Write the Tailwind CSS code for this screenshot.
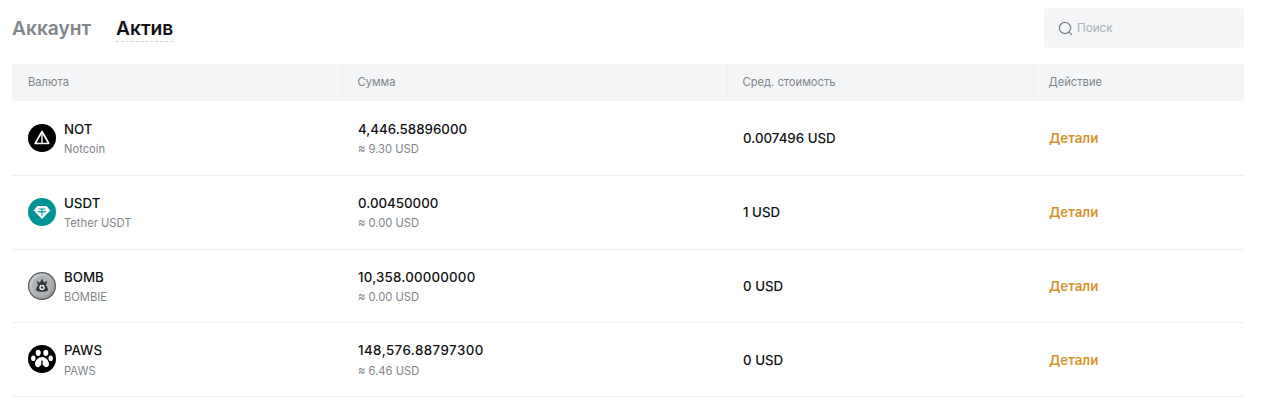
<!DOCTYPE html>
<html lang="ru">
<head>
  <meta charset="UTF-8" />
  <meta name="viewport" content="width=device-width, initial-scale=1.0" />
  <title>Актив</title>
  <script src="https://cdn.jsdelivr.net/npm/@tailwindcss/browser@4"></script>
</head>
<body class="bg-white h-[415px] overflow-hidden font-['Inter','Noto_Sans',sans-serif]">
  <div class="pl-3 pr-[26px] pt-2">

    <!-- Tabs + search -->
    <div class="flex items-start justify-between h-[56px]">
      <div class="flex gap-[25px] pt-[7px] text-[19.2px] font-semibold leading-[26px]">
        <span class="text-[#81858c]">Аккаунт</span>
        <span class="text-[#121214] border-b border-dashed border-[#d0d3d7] h-[27px]">Актив</span>
      </div>
      <div class="flex items-center gap-1 w-[200px] h-10 px-[14px] rounded bg-[#f3f5f7]">
        <svg class="w-[15px] h-[15px]" viewBox="0 0 15 15" fill="none" stroke="#81858c" stroke-width="1.3">
          <circle cx="7" cy="7" r="5.6" />
          <path d="M11 11l2.6 2.6" stroke-linecap="round" />
        </svg>
        <span class="pt-px text-[11.7px] text-[#adb1b8]">Поиск</span>
      </div>
    </div>

    <!-- Table -->
    <table class="w-[1232px] table-fixed border-collapse">
      <colgroup>
        <col class="w-[330px]" /><col class="w-[385px]" /><col class="w-[306px]" /><col class="w-[211px]" />
      </colgroup>
      <thead class="bg-[#f3f5f7] text-[11.2px] text-[#81858c] text-left">
        <tr class="h-[37px]">
          <th class="pl-4 font-normal">Валюта</th>
          <th class="pl-[15px] font-normal border-l border-[#eef0f2]">Сумма</th>
          <th class="pl-[15px] font-normal border-l border-[#eef0f2]">Сред. стоимость</th>
          <th class="pl-[15px] font-normal border-l border-[#eef0f2]">Действие</th>
        </tr>
      </thead>
      <tbody>
        <tr class="h-[74px] border-b border-[#eceef0]">
          <td class="pl-4">
            <div class="flex items-center gap-2">
              <svg class="w-7 h-7" viewBox="0 0 28 28">
                <circle cx="14" cy="14" r="14" fill="#000" />
                <path d="M14 7.5L20.800 19.500H7.200Z" fill="none" stroke="#fff" stroke-width="1.700" stroke-linejoin="round" />
                <path d="M14 8v11.500" stroke="#fff" stroke-width="1.400" />
              </svg>
              <div>
                <div class="text-[13.3px] leading-5 font-medium text-[#121214]">NOT</div>
                <div class="text-[11.2px] leading-4 mt-[2px] text-[#81858c]">Notcoin</div>
              </div>
            </div>
          </td>
          <td class="pl-4">
            <div class="text-[13.3px] leading-5 font-medium text-[#121214]">4,446.58896000</div>
            <div class="text-[11.2px] leading-4 mt-[2px] text-[#81858c]">≈ 9.30 USD</div>
          </td>
          <td class="pl-4 pt-[2px] text-[13.3px] font-medium text-[#121214]">0.007496 USD</td>
          <td class="pl-4 pt-[2px] text-[13.3px] font-semibold text-[#d6932f]">Детали</td>
        </tr>
        <tr class="h-[74px] border-b border-[#eceef0]">
          <td class="pl-4">
            <div class="flex items-center gap-2">
              <svg class="w-7 h-7" viewBox="0 0 28 28">
                <circle cx="14" cy="14" r="14" fill="#009393" />
                <path d="M9.500 8.500h9L21.800 12.500 14 20.500 6.200 12.500Z" fill="#fff" stroke="#fff" stroke-linejoin="round" />
                <path d="M10.500 11h7M14 11v6.500M10 13.200c2.500 1 5.500 1 8 0" fill="none" stroke="#009393" stroke-width="1.100" />
              </svg>
              <div>
                <div class="text-[13.3px] leading-5 font-medium text-[#121214]">USDT</div>
                <div class="text-[11.2px] leading-4 mt-[2px] text-[#81858c]">Tether USDT</div>
              </div>
            </div>
          </td>
          <td class="pl-4">
            <div class="text-[13.3px] leading-5 font-medium text-[#121214]">0.00450000</div>
            <div class="text-[11.2px] leading-4 mt-[2px] text-[#81858c]">≈ 0.00 USD</div>
          </td>
          <td class="pl-4 pt-[2px] text-[13.3px] font-medium text-[#121214]">1 USD</td>
          <td class="pl-4 pt-[2px] text-[13.3px] font-semibold text-[#d6932f]">Детали</td>
        </tr>
        <tr class="h-[73px] border-b border-[#eceef0]">
          <td class="pl-4">
            <div class="flex items-center gap-2">
              <svg class="w-7 h-7" viewBox="0 0 28 28">
                <defs>
                  <linearGradient id="bombRim" x1="0" y1="0" x2="1" y2="1">
                    <stop offset="0" stop-color="#d6d8da" />
                    <stop offset="1" stop-color="#8d9094" />
                  </linearGradient>
                </defs>
                <circle cx="14" cy="14" r="14" fill="#55585c" />
                <circle cx="14" cy="14" r="12.800" fill="url(#bombRim)" />
                <circle cx="14" cy="14" r="10" fill="#adb0b4" />
                <path d="M8 18.500c0-2.200.8-4 2.200-5.200L8.500 8.800l3.300 2L14 6.800l2.200 4 3.300-2-1.700 4.500C19.200 14.500 20 16.300 20 18.500c-3 1.700-9 1.700-12 0Z" fill="#33353a" />
                <circle cx="14" cy="15.500" r="2.700" fill="#eceded" />
                <circle cx="14" cy="15.500" r="1.200" fill="#33353a" />
              </svg>
              <div>
                <div class="text-[13.3px] leading-5 font-medium text-[#121214]">BOMB</div>
                <div class="text-[11.2px] leading-4 mt-[2px] text-[#81858c]">BOMBIE</div>
              </div>
            </div>
          </td>
          <td class="pl-4">
            <div class="text-[13.3px] leading-5 font-medium tracking-[0.2px] text-[#121214]">10,358.00000000</div>
            <div class="text-[11.2px] leading-4 mt-[2px] text-[#81858c]">≈ 0.00 USD</div>
          </td>
          <td class="pl-4 pt-[2px] text-[13.3px] font-medium text-[#121214]">0 USD</td>
          <td class="pl-4 pt-[2px] text-[13.3px] font-semibold text-[#d6932f]">Детали</td>
        </tr>
        <tr class="h-[74px] border-b border-[#eceef0]">
          <td class="pl-4">
            <div class="flex items-center gap-2">
              <svg class="w-7 h-7" viewBox="0 0 28 28">
                <circle cx="14" cy="14" r="14" fill="#000" />
                <ellipse cx="10.200" cy="7.800" rx="2.500" ry="3.100" fill="#fff" />
                <ellipse cx="17.800" cy="7.800" rx="2.500" ry="3.100" fill="#fff" />
                <ellipse cx="5.300" cy="13.200" rx="2.200" ry="2.800" fill="#fff" />
                <ellipse cx="22.700" cy="13.200" rx="2.200" ry="2.800" fill="#fff" />
                <path d="M14 12c3.500 0 7 3.500 7 7 0 3-3 4-4.800 2.800L14 20l-2.200 1.800C10 23 7 22 7 19c0-3.500 3.500-7 7-7Z" fill="#fff" />
                <path d="M14 15.500v4.500M11.500 22.500l2.500-2.500 2.500 2.500" fill="none" stroke="#000" stroke-width="1.300" />
              </svg>
              <div>
                <div class="text-[13.3px] leading-5 font-medium text-[#121214]">PAWS</div>
                <div class="text-[11.2px] leading-4 mt-[3px] text-[#81858c]">PAWS</div>
              </div>
            </div>
          </td>
          <td class="pl-4">
            <div class="text-[13.3px] leading-5 font-medium tracking-[0.44px] text-[#121214]">148,576.88797300</div>
            <div class="text-[11.2px] leading-4 mt-[3px] text-[#81858c]">≈ 6.46 USD</div>
          </td>
          <td class="pl-4 pt-[4px] text-[13.3px] font-medium text-[#121214]">0 USD</td>
          <td class="pl-4 pt-[4px] text-[13.3px] font-semibold text-[#d6932f]">Детали</td>
        </tr>
      </tbody>
    </table>
  </div>
</body>
</html>
